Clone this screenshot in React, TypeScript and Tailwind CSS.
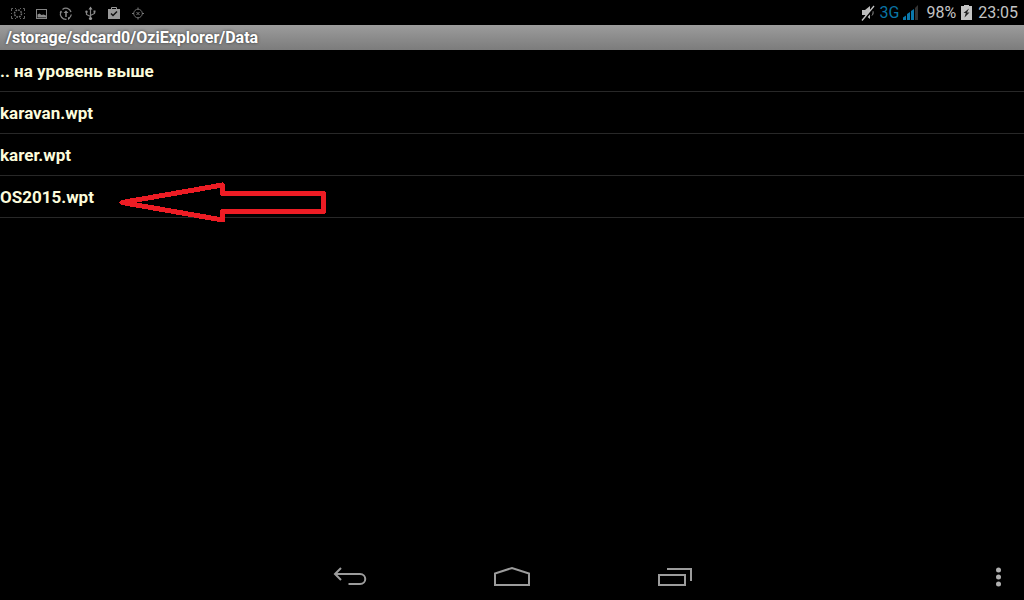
import type { ReactNode } from 'react'

const files = ['.. на уровень выше', 'karavan.wpt', 'karer.wpt', 'OS2015.wpt']

const TrayIcon = ({ children }: { children: ReactNode }) => (
  <svg
    className="w-6 h-6"
    viewBox="0 0 24 24"
    fill="none"
    stroke="#858585"
    aria-hidden="true"
  >
    {children}
  </svg>
)

const StatusBar = () => {
  return (
    <div className="flex h-[25px] items-center justify-between px-[6px]">
      <div className="flex">
        <TrayIcon>
          <path d="M5.500 10V7.500H7M17 7.500h1.500V10M18.500 15v2.500H17M7 17.500H5.500V15M9 7.500h1M14 7.500h1M9 17.500h1M14 17.500h1M5.500 12v1M18.500 12v1" stroke="#666" />
          <circle cx="12" cy="12.500" r="3.500" stroke="#777" strokeDasharray="1.700 1" strokeWidth="1.500" />
        </TrayIcon>
        <TrayIcon>
          <rect x="6.500" y="8.500" width="10" height="9" />
          <path d="M7.500 16.500v-3l2-1 2 1.500 2-.500 2.500 1v2z" fill="#8c8c8c" stroke="none" />
        </TrayIcon>
        <TrayIcon>
          <path d="M8.500 8.500a5.300 5.300 0 0 1 8.500 2.500M17.300 13.500a5.300 5.300 0 0 1-2.500 3.700M12.500 18.300A5.500 5.500 0 0 1 6.700 11" strokeWidth="1.300" />
          <path d="M12 16v-5" strokeWidth="1.600" />
          <path d="M12 9.500l2.500 2.500h-5zM5.500 11.500l1.500-2 1.500 2zM14 16v3l2-1.500z" fill="#8c8c8c" stroke="none" />
        </TrayIcon>
        <TrayIcon>
          <path d="M12.500 8v9M12.500 15.500L8.500 13.500v-2.500M12.500 14.500l4-2V10.500" strokeWidth="1.200" />
          <path d="M12.500 5.500l2 3h-4z" fill="#999" stroke="none" />
          <circle cx="12.500" cy="17.500" r="1.600" fill="#999" stroke="none" />
          <circle cx="8.500" cy="10.800" r="1.200" fill="#8c8c8c" stroke="none" />
          <path d="M15.500 9.500h2v2h-2z" fill="#8c8c8c" stroke="none" />
        </TrayIcon>
        <TrayIcon>
          <path d="M9.500 8V6.500h5V8" stroke="#999" />
          <path d="M6 8h12v10H6z" fill="#999" stroke="none" />
          <path d="M9 12.500l2 2 4-4" stroke="#111" strokeWidth="1.500" />
        </TrayIcon>
        <TrayIcon>
          <circle cx="12" cy="12.500" r="4.300" stroke="#6c6c6c" />
          <path d="M12 6.500v2M12 16.500v2M6 12.500h2M16 12.500h2M10.500 11l3 3M13.500 11l-3 3" stroke="#777" />
        </TrayIcon>
      </div>
      <div className="flex items-center text-base leading-6 text-[#c4c4c4]">
        <svg className="mr-1 h-[18px] w-4" viewBox="0 0 16 18" aria-hidden="true">
          <path d="M2 6h3l5-4v13l-5-4H2z" fill="#bdbdbd" />
          <path d="M12 6c1.500 1.500 1.500 4 0 5.500" stroke="#999" fill="none" />
          <path d="M2.500 17.500L14.500 3.500" stroke="#000" strokeWidth="2" />
          <path d="M2 16.500L14 2" stroke="#c4c4c4" strokeWidth="1.300" />
        </svg>
        <span className="text-[#0a74a4]">3G</span>
        <svg className="ml-1 mr-[7px] h-4 w-4" viewBox="0 0 16 16" aria-hidden="true">
          <path d="M0 12.500l3-2V15H0zM4 9l3-2v8H4zM8 6l3-2v11H8z" fill="#0a78ac" />
          <path d="M12 3l3-3v15h-3z" fill="#343434" />
        </svg>
        <span>98%</span>
        <svg className="ml-[5px] mr-[6px] h-4 w-[11px]" viewBox="0 0 11 16" aria-hidden="true">
          <path d="M3 0h5v1h3v14H0V1h3z" fill="#c4c4c4" />
          <path d="M8 3.500L2.500 8h2.300L3.500 12.500l5-5H6z" fill="#222" />
        </svg>
        <span>23:05</span>
      </div>
    </div>
  )
}

const NavBar = () => {
  return (
    <nav className="flex h-12 items-center pt-[2px] text-[#9c9c9c]">
      <div className="w-[52px]" />
      <div className="flex flex-1 justify-center">
        <button className="flex w-[162px] justify-center" aria-label="Назад">
          <svg className="h-8 w-10" viewBox="0 0 40 32" fill="none" stroke="currentColor" strokeWidth="2">
            <path d="M5 13h25c7 0 7 10 0 10H18.500M11 7l-6 6 6 6" />
          </svg>
        </button>
        <button className="flex w-[162px] justify-center" aria-label="Домой">
          <svg className="h-8 w-10" viewBox="0 0 40 32" fill="none" stroke="currentColor" strokeWidth="2">
            <path d="M3 24V12.500L20 7l17 5.500V24z" />
          </svg>
        </button>
        <button className="flex w-[162px] justify-center" aria-label="Недавние">
          <svg className="h-8 w-10" viewBox="0 0 40 32" fill="none" stroke="currentColor" strokeWidth="2">
            <path d="M5 14h26v10H5zM13 8h24v12" />
          </svg>
        </button>
      </div>
      <button className="flex w-[52px] justify-center" aria-label="Меню">
        <svg className="h-8 w-5" viewBox="0 0 20 32" fill="#b0b0b0">
          <circle cx="10.500" cy="9" r="2.500" />
          <circle cx="10.500" cy="16" r="2.500" />
          <circle cx="10.500" cy="23" r="2.500" />
        </svg>
      </button>
    </nav>
  )
}

const App = () => {
  return (
    <div className="flex min-h-screen flex-col bg-black font-[Roboto,sans-serif]">
      <StatusBar />
      <h1 className="h-[25px] bg-linear-to-b from-[#9c9c9c] to-[#7c7c7c] px-[6px] text-base font-bold leading-[25px] text-white [text-shadow:0_0_3px_#333]">
        /storage/sdcard0/OziExplorer/Data
      </h1>
      <ul className="relative flex-1">
        {files.map((name) => (
          <li key={name} className="border-b border-[#282828]">
            <button className="block h-[41px] w-full pt-[2px] text-left text-[17px] font-bold text-[#fcfcdc]">
              {name}
            </button>
          </li>
        ))}
        {/* pointer drawn over the last file */}
        <svg
          className="pointer-events-none absolute left-[118px] top-[130px] h-11 w-[212px]"
          viewBox="0 0 212 44"
          fill="none"
          stroke="#ed1c24"
          strokeWidth="5"
          strokeLinejoin="round"
          shapeRendering="crispEdges"
          aria-hidden="true"
        >
          <path d="M4 22.500L104.500 5v8.500h101v18h-101V40z" />
        </svg>
      </ul>
      <NavBar />
    </div>
  )
}

export default App
